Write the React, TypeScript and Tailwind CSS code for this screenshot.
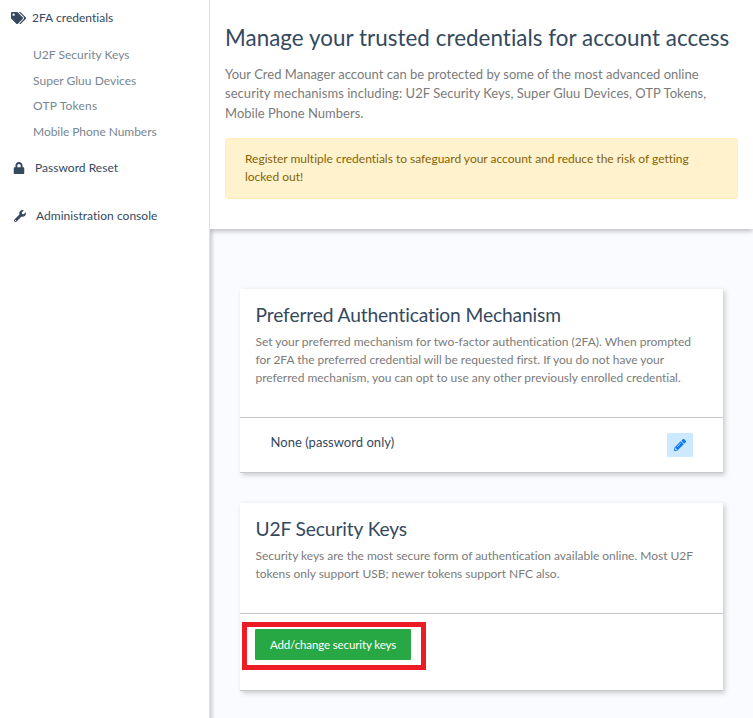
import type { ReactNode } from 'react';
import { FaTags, FaLock, FaWrench, FaPencilAlt } from 'react-icons/fa';

const credentialLinks = [
  { label: 'U2F Security Keys', space: 'h-[26px] tracking-[0.03px]' },
  { label: 'Super Gluu Devices', space: 'h-[25px]' },
  { label: 'OTP Tokens', space: 'h-[26px] tracking-[0.2px]' },
  { label: 'Mobile Phone Numbers', space: 'h-[26px] tracking-[-0.05px]' },
];

function Sidebar() {
  return (
    <nav className="w-[210px] shrink-0 border-r border-[#dee2e6] bg-white text-[12px] leading-[18px] tracking-[0.03px] text-[#34495e]">
      <a className="mt-[9px] flex h-[18px] items-center pl-[11px]">
        <FaTags className="h-[12px] w-[15px]" />
        <span className="ml-[6px]">2FA credentials</span>
      </a>
      <ul className="mt-[19px] pl-[33px] text-[#798692]">
        {credentialLinks.map((link) => (
          <li key={link.label} className={link.space}>{link.label}</li>
        ))}
      </ul>
      <a className="mt-[10px] flex h-[18px] items-center pl-[13px]">
        <FaLock className="h-[12px] w-[12px]" />
        <span className="ml-[10px]">Password Reset</span>
      </a>
      <a className="mt-[30px] flex h-[18px] items-center pl-[14px]">
        <FaWrench className="h-[12px] w-[12px]" />
        <span className="ml-[10px]">Administration console</span>
      </a>
    </nav>
  );
}

function Card({ title, lines, height, children }: { title: string; lines: string[]; height: string; children: ReactNode }) {
  return (
    <section className={`${height} flex flex-col border-b border-[#c8c8c8] bg-white shadow-[2px_2px_5px_rgba(0,0,0,0.2)]`}>
      <div className="flex-1 border-b border-[#c8c8c8] pl-[15.5px] pt-[14px]">
        <h2 className="text-[19.2px] leading-[24px] tracking-[-0.12px] text-[#34495e]">{title}</h2>
        <div className="mt-[6px] text-[12px] leading-[18px] tracking-[-0.02px] text-[#7b7b7b]">
          {lines.map((line) => <p key={line}>{line}</p>)}
        </div>
      </div>
      {children}
    </section>
  );
}

export default function App() {
  return (
    <div className="flex h-[718px] w-[753px] overflow-hidden bg-white font-['Lato',sans-serif] whitespace-nowrap [font-variant-ligatures:none]">
      <Sidebar />
      <main className="flex flex-1 flex-col overflow-hidden bg-[#fafbff] bg-linear-to-r from-[#d0d2d8] from-0% via-[#fafbff] via-[5px] to-[#fafbff]">
        <header className="h-[229px] bg-white pl-[15px] pr-[15px] pt-[23px] shadow-[0_2px_5px_rgba(0,0,0,0.25)]">
          <h1 className="text-[22.4px] leading-[30px] tracking-[0.04px] text-[#34495e]">Manage your trusted credentials for account access</h1>
          <div className="mt-[11.5px] text-[13px] leading-[19.5px] tracking-[0.02px] text-[#7b7b7b]">
            <p className="tracking-[0.01px]">Your Cred Manager account can be protected by some of the most advanced online</p>
            <p className="tracking-[0.045px]">security mechanisms including: U2F Security Keys, Super Gluu Devices, OTP Tokens,</p>
            <p>Mobile Phone Numbers.</p>
          </div>
          <div className="mt-[15px] h-[61px] rounded-[3px] border border-[#ffeeba] bg-[#fff2cd] pl-[19px] pt-[11px] text-[12px] leading-[18px] tracking-[-0.01px] text-[#856404]">
            <p>Register multiple credentials to safeguard your account and reduce the risk of getting</p>
            <p>locked out!</p>
          </div>
        </header>
        <div className="flex flex-col gap-[30px] pl-[30px] pr-[30px] pt-[60px]">
          <Card
            title="Preferred Authentication Mechanism"
            lines={[
              'Set your preferred mechanism for two-factor authentication (2FA). When prompted',
              'for 2FA the preferred credential will be requested first. If you do not have your',
              'preferred mechanism, you can opt to use any other previously enrolled credential.',
            ]}
            height="h-[184px]"
          >
            <div className="flex h-[54px] items-start justify-between pl-[30.5px] pr-[30px] pt-[15px]">
              <span className="text-[13px] leading-[18px] tracking-[0.03px] text-[#34495e]">None (password only)</span>
              <button className="flex h-[24px] w-[26px] items-center justify-center rounded-[1px] bg-[#cce9ff] text-[#0878f9]">
                <FaPencilAlt className="h-[12px] w-[12px]" />
              </button>
            </div>
          </Card>
          <Card
            title="U2F Security Keys"
            lines={[
              'Security keys are the most secure form of authentication available online. Most U2F',
              'tokens only support USB; newer tokens support NFC also.',
            ]}
            height="h-[188px]"
          >
            <div className="h-[76px] pl-[2px] pt-[8px]">
              <div className="flex h-[48px] w-[184px] border-[5px] border-[#ed1c24] pl-[8px] pt-[2px]">
                <button className="h-[31px] w-[156px] rounded-[1px] bg-[#28a745] text-[11.5px] leading-[31px] tracking-[-0.12px] text-white">Add/change security keys</button>
              </div>
            </div>
          </Card>
        </div>
      </main>
    </div>
  );
}
